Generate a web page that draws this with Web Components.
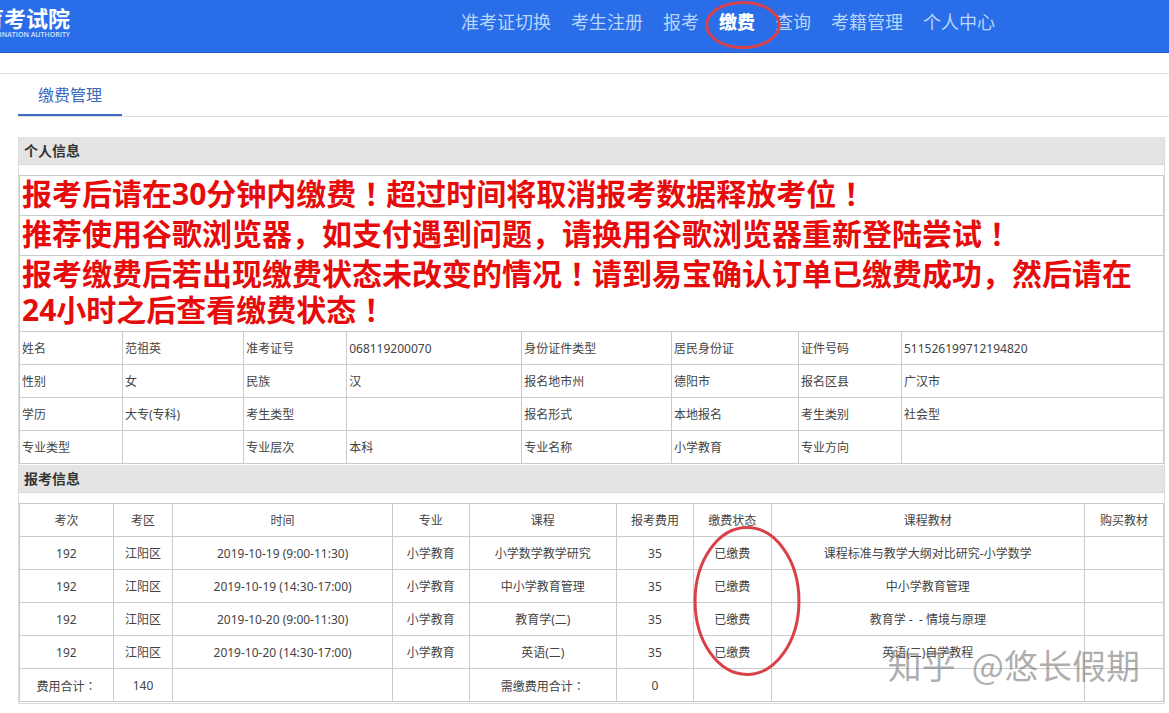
<!DOCTYPE html>
<html lang="zh-CN">
<head>
<meta charset="utf-8">
<meta name="viewport" content="width=device-width, initial-scale=1">
<title>缴费管理</title>
<style>
  body {
    margin: 0;
    background: #fff;
    color: #444;
    font-family: "Noto Sans", "Noto Sans CJK SC", sans-serif;
    font-size: 12px;
  }
</style>
</head>
<body>
<site-header>
  <nav-link href="#switch">准考证切换</nav-link>
  <nav-link href="#register">考生注册</nav-link>
  <nav-link href="#apply">报考</nav-link>
  <nav-link href="#pay" active>缴费</nav-link>
  <nav-link href="#query">查询</nav-link>
  <nav-link href="#record">考籍管理</nav-link>
  <nav-link href="#me">个人中心</nav-link>
</site-header>
<tab-bar><tab-link href="#manage">缴费管理</tab-link></tab-bar>
<exam-content>
  <info-section heading="个人信息"><person-table></person-table></info-section>
  <info-section heading="报考信息"><fee-table></fee-table></info-section>
  <water-mark><span>知乎</span><span>@悠长假期</span></water-mark>
</exam-content>

<script>
  class BaseElement extends HTMLElement {
    connectedCallback() {
      if (this.shadowRoot) return;
      this.attachShadow({ mode: 'open' }).innerHTML =
        `<style>${this.styles()}</style>${this.markup()}`;
    }
  }

  // Full-width exclamation marks and colons are set centred in their square.
  const centrePunctuation = text =>
    text.replace(/[！：]/g, m => `<span class="mark" lang="zh-TW">${m}</span>`);

  customElements.define('hand-ring', class extends BaseElement {
    styles() {
      return `:host { position: absolute; pointer-events: none; z-index: 2; }
        svg { display: block; width: 100%; height: 100%; overflow: visible; }`;
    }
    markup() {
      return `<svg aria-hidden="true"><ellipse cx="50%" cy="50%" rx="49%" ry="49%"
        fill="none" stroke="#d94149" stroke-width="3"/></svg>`;
    }
  });

  customElements.define('site-header', class extends BaseElement {
    styles() {
      return `
        :host { display: flex; justify-content: space-between; align-items: flex-start;
          height: 52px; background: #296de8; border-bottom: 1px solid #2a5fcb; }
        .logo { display: flex; flex-direction: column; align-items: flex-end; width: 70px;
          padding-top: 6px; color: #fff; overflow: hidden; white-space: nowrap; }
        .name { font-size: 22px; line-height: 24px; font-weight: 700; }
        .sub { font: 600 7px/10px "Open Sans", sans-serif; color: #d6e6fd; }
        nav { display: flex; gap: 20px; padding: 9px 174px 0 0; }`;
    }
    markup() {
      return `<div class="logo"><span class="name">育考试院</span><span class="sub">INATION AUTHORITY</span></div>
        <nav><slot></slot></nav>`;
    }
  });

  customElements.define('nav-link', class extends BaseElement {
    styles() {
      return `
        :host { display: block; position: relative; }
        a { color: #b8d6fb; font-size: 18px; line-height: 26px; font-weight: 400;
          text-decoration: none; white-space: nowrap; }
        :host([active]) a { color: #fff; font-weight: 900; }
        hand-ring { left: -13px; top: -7px; width: 74px; height: 46px; }`;
    }
    markup() {
      return `<a href="${this.getAttribute('href')}"><slot></slot></a>
        ${this.hasAttribute('active') ? '<hand-ring></hand-ring>' : ''}`;
    }
  });

  customElements.define('tab-bar', class extends BaseElement {
    styles() {
      return `
        :host { display: block; margin-top: 20px; border-top: 1px solid #dfdfdf; padding-left: 18px; }
        div { display: flex; border-bottom: 1px solid #dfdfdf; height: 42px; }`;
    }
    markup() { return `<div><slot></slot></div>`; }
  });

  customElements.define('tab-link', class extends BaseElement {
    styles() {
      return `
        :host { display: block; }
        a { display: block; padding: 2px 20px 0; border-bottom: 2px solid #3a6bc6; color: #3a68bd;
          font-size: 16px; line-height: 38px; text-decoration: none; }`;
    }
    markup() { return `<a href="${this.getAttribute('href')}"><slot></slot></a>`; }
  });

  customElements.define('exam-content', class extends BaseElement {
    styles() {
      return `:host { display: block; position: relative; margin: 20px 4px 10px 18px;
        border: 1px solid #d9dcdb; border-top: 0; }`;
    }
    markup() { return `<slot></slot>`; }
  });

  customElements.define('info-section', class extends BaseElement {
    styles() {
      return `
        :host { display: block; padding-bottom: 1px; background: #fff; }
        h2 { margin: 0 0 10px; padding-left: 5px; background: #e4e4e4; color: #333;
          border-bottom: 1px solid #d6dad9; font-size: 14px; line-height: 27px; font-weight: 700; }`;
    }
    markup() { return `<h2>${this.getAttribute('heading')}</h2><slot></slot>`; }
  });

  const tableStyles = `
    :host { display: block; }
    table { width: 100%; border-collapse: collapse; table-layout: fixed; }
    td, th { box-sizing: border-box; border: 1px solid #c9cccb; height: 33px; padding: 2px 2px 0;
      font-size: 12px; line-height: 16px; font-weight: 400; text-align: left; }
    .mark { font-family: "Noto Sans CJK TC", sans-serif; }`;
  const cols = widths => `<colgroup>${widths.map(w => `<col style="width:${w}%">`).join('')}</colgroup>`;

  customElements.define('person-table', class extends BaseElement {
    styles() {
      return tableStyles + `
        .notice { padding: 0 2px 3px; color: #e60c0c; font-size: 30px; line-height: 36px; font-weight: 700; }
        .notice .mark { line-height: 1; }`;
    }
    markup() {
      const notices = [
        '报考后请在30分钟内缴费！超过时间将取消报考数据释放考位！',
        '推荐使用谷歌浏览器，如支付遇到问题，请换用谷歌浏览器重新登陆尝试！',
        '报考缴费后若出现缴费状态未改变的情况！请到易宝确认订单已缴费成功，然后请在24小时之后查看缴费状态！'
      ];
      const rows = [
        ['姓名', '范祖英', '准考证号', '068119200070', '身份证件类型', '居民身份证', '证件号码', '511526199712194820'],
        ['性别', '女', '民族', '汉', '报名地市州', '德阳市', '报名区县', '广汉市'],
        ['学历', '大专(专科)', '考生类型', '', '报名形式', '本地报名', '考生类别', '社会型'],
        ['专业类型', '', '专业层次', '本科', '专业名称', '小学教育', '专业方向', '']
      ];
      return `<table>${cols([9, 10.6, 9, 15.3, 13.1, 11.1, 9, 22.9])}<tbody>
        ${notices.map(n => `<tr><td class="notice" colspan="8">${centrePunctuation(n)}</td></tr>`).join('')}
        ${rows.map(r => `<tr>${r.map((c, i) => i % 2 ? `<td>${c}</td>` : `<th scope="row">${c}</th>`).join('')}</tr>`).join('')}
      </tbody></table>`;
    }
  });

  customElements.define('fee-table', class extends BaseElement {
    styles() {
      return tableStyles + `
        td, th { text-align: center; }
        .status { position: relative; }
        hand-ring { left: 0; top: 22px; width: 106px; height: 150px; }`;
    }
    markup() {
      const heads = ['考次', '考区', '时间', '专业', '课程', '报考费用', '缴费状态', '课程教材', '购买教材'];
      const rows = [
        ['192', '江阳区', '2019-10-19 (9:00-11:30)', '小学教育', '小学数学教学研究', '35', '已缴费', '课程标准与教学大纲对比研究-小学数学', ''],
        ['192', '江阳区', '2019-10-19 (14:30-17:00)', '小学教育', '中小学教育管理', '35', '已缴费', '中小学教育管理', ''],
        ['192', '江阳区', '2019-10-20 (9:00-11:30)', '小学教育', '教育学(二)', '35', '已缴费', '教育学 -&nbsp; - 情境与原理', ''],
        ['192', '江阳区', '2019-10-20 (14:30-17:00)', '小学教育', '英语(二)', '35', '已缴费', '英语(二)自学教程', ''],
        ['费用合计：', '140', '', '', '需缴费用合计：', '0', '', '', '']
      ];
      return `<table>${cols([8.2, 5.2, 19.2, 6.7, 12.9, 6.7, 6.8, 27.4, 6.9])}
        <thead><tr>${heads.map(h => h === '缴费状态'
          ? `<th scope="col" class="status">${h}<hand-ring></hand-ring></th>`
          : `<th scope="col">${h}</th>`).join('')}</tr></thead>
        <tbody>${rows.map(r => `<tr>${r.map(c => `<td>${centrePunctuation(c)}</td>`).join('')}</tr>`).join('')}</tbody></table>`;
    }
  });

  customElements.define('water-mark', class extends BaseElement {
    styles() {
      return `:host { position: absolute; right: 24px; bottom: 16px; display: flex; gap: 16px;
        pointer-events: none; white-space: nowrap;
        color: rgba(120, 120, 120, .6); font: 400 34px/44px "Noto Sans CJK SC", sans-serif; }`;
    }
    markup() { return `<slot></slot>`; }
  });
</script>
</body>
</html>
